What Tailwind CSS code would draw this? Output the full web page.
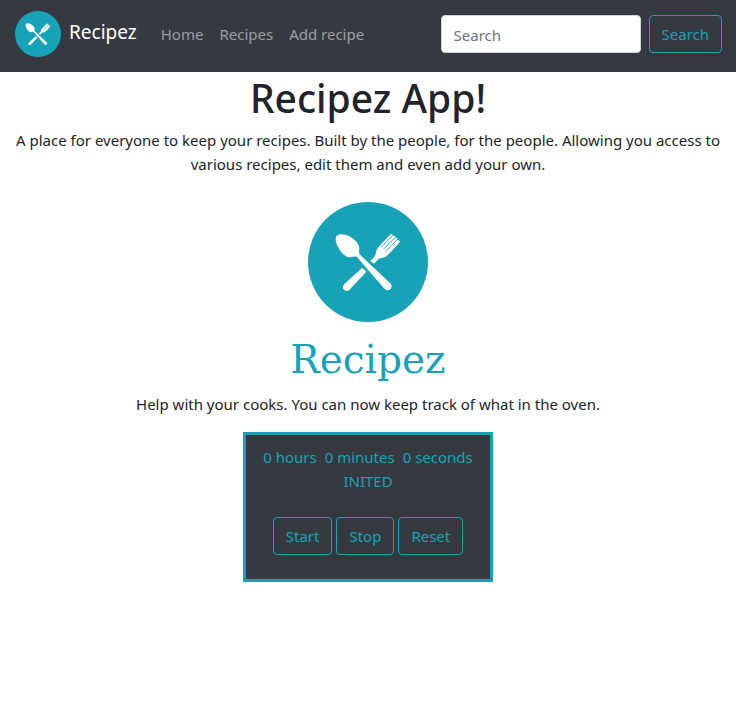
<!DOCTYPE html>
<html lang="en">
<head>
<meta charset="utf-8">
<meta name="viewport" content="width=device-width, initial-scale=1">
<title>Recipez</title>
<script src="https://cdn.jsdelivr.net/npm/@tailwindcss/browser@4"></script>
</head>
<body class="bg-white font-['Segoe_UI','Noto_Sans',sans-serif] text-[15px] leading-6 text-[#212529]">
<svg class="hidden" aria-hidden="true">
  <symbol id="logo" viewBox="0 0 120 120">
    <circle cx="60" cy="60" r="60" fill="#18a2b8"/>
    <g fill="#fff">
      <path d="M28.500 34C31 31.400 37.500 31.600 42.500 35C47.500 38.400 51 41.500 51.200 46C51.300 48.500 50.600 50.500 51.800 52.500L82.500 81.500C84.300 83.500 83.800 86 82.200 87.300C80.500 88.800 78.300 88.500 76.500 86.800L48.900 55C47.500 53.800 45.500 54.800 42.500 55.200C38 55.600 34.500 52 31.500 47.500C28 42.500 26.600 37 28.500 34Z"/>
      <path d="M54.300 65.700L58.300 69.700L42 87.300C40 89.500 37.400 89.300 36 87.800C34.400 86.200 34.500 83.800 36.300 82Z"/>
      <path d="M62.200 59L66.800 54.200C68.200 52.200 67.500 50 69 47.300C71 44 77.500 37.500 82.800 32.300Q84.200 31.500 84.800 33L87 34.400L87.800 35.600L89.500 36.500L90 38.400Q92.300 38.200 92.300 39.600C87.500 45 82 51.500 78.800 54C76 56.300 73.500 55.300 70.500 57L66 61.700Z"/>
    </g>
    <path d="M73.500 45L85.300 32.800M75.700 47L87.800 34.800M77.900 49L90 37" stroke="#18a2b8" stroke-width="0.9" stroke-linecap="round"/>
  </symbol>
</svg>
<nav class="flex h-18 items-center bg-[#343a40] pr-3.5 pl-4">
  <a href="#" class="flex items-center gap-2 text-[19px] text-white">
    <svg class="-ml-px size-[46px] -translate-y-0.5" aria-hidden="true"><use href="#logo"/></svg>
    <span class="pb-2">Recipez</span>
  </a>
  <div class="ml-6 flex gap-4 pb-1 text-white/50">
    <a href="#">Home</a>
    <a href="#">Recipes</a>
    <a href="#">Add recipe</a>
  </div>
  <form class="ml-auto flex gap-2 pb-1">
    <input type="search" aria-label="Search" placeholder="Search" class="h-[38px] w-50 rounded border border-[#ced4da] bg-white px-3 pt-0.5 placeholder:text-[#6c757d]">
    <button type="button" class="h-[38px] rounded border border-[#17a2b8] px-3 text-[#17a2b8]">Search</button>
  </form>
</nav>
<main class="flex flex-col items-center px-2 text-center">
  <h1 class="mt-0.5 mb-1.5 text-[39px] leading-12 font-medium">Recipez App!</h1>
  <p>A place for everyone to keep your recipes. Built by the people, for the people. Allowing you access to various recipes, edit them and even add your own.</p>
  <svg class="mt-6.5 size-30" aria-hidden="true"><use href="#logo"/></svg>
  <div class="mt-3.5 font-['Roboto_Slab','DejaVu_Serif',serif] text-[39px] leading-12 text-[#18a2b8]">Recipez</div>
  <p class="mt-2">Help with your cooks. You can now keep track of what in the oven.</p>
  <section aria-label="Timer" class="mt-4 flex h-[150px] w-[250px] flex-col items-center border-3 border-[#17a2b8] bg-[#343a40] pt-2.5 text-[#17a2b8]">
    <div class="flex gap-2 whitespace-nowrap"><span>0 hours</span><span>0 minutes</span><span>0 seconds</span></div>
    <p>INITED</p>
    <div class="mt-6 flex gap-1">
      <button type="button" class="h-[38px] rounded border border-[#17a2b8] px-3">Start</button>
      <button type="button" class="h-[38px] rounded border border-[#17a2b8] px-3">Stop</button>
      <button type="button" class="h-[38px] rounded border border-[#17a2b8] px-3">Reset</button>
    </div>
  </section>
</main>
</body>
</html>
